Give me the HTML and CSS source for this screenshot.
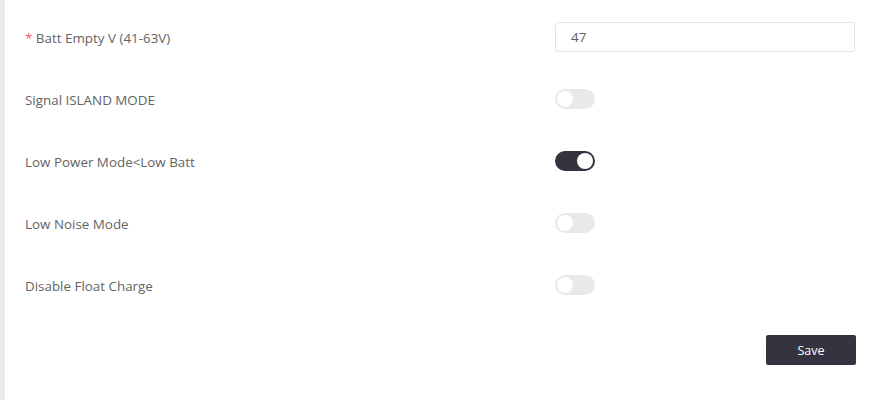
FILE: index.html
```html
<!DOCTYPE html>
<html>
<head>
<meta charset="utf-8">
<link rel="stylesheet" href="styles.css">
</head>
<body>
<div class="page">
  <div class="side"></div>
  <form class="form">
    <div class="row">
      <label class="label"><span class="req">*</span> Batt Empty V (41-63V)</label>
      <div class="control"><input class="input" type="text" value="47"></div>
    </div>
    <div class="row">
      <label class="label">Signal ISLAND MODE</label>
      <div class="control"><span class="switch"><span class="knob"></span></span></div>
    </div>
    <div class="row">
      <label class="label">Low Power Mode&lt;Low Batt</label>
      <div class="control"><span class="switch on"><span class="knob"></span></span></div>
    </div>
    <div class="row">
      <label class="label">Low Noise Mode</label>
      <div class="control"><span class="switch"><span class="knob"></span></span></div>
    </div>
    <div class="row">
      <label class="label">Disable Float Charge</label>
      <div class="control"><span class="switch"><span class="knob"></span></span></div>
    </div>
    <div class="actions">
      <button class="btn" type="button">Save</button>
    </div>
  </form>
</div>
</body>
</html>
```
FILE: styles.css
```css
* { box-sizing: border-box; }
html, body { margin: 0; padding: 0; background: #fff; }
body { font-family: "Open Sans", "Noto Sans", sans-serif; font-size: 13.4px; color: #646464; }
.page { display: flex; min-height: 400px; }
.side { width: 5px; background: #ebebeb; flex: none; }
.form { flex: 1; padding: 22px 38px 0 20px; }
.row { display: flex; align-items: center; height: 30px; margin-bottom: 32px; }
.label { flex: 1; padding-top: 2px; }
.req { color: #f5576c; }
.control { width: 300px; flex: none; display: flex; align-items: center; }
.input { width: 300px; height: 30px; border: 1px solid #e4e4e4; border-radius: 3px; padding: 0 15px; font: inherit; font-size: 13.4px; color: #606060; outline: none; }
.switch { position: relative; display: inline-block; width: 40px; height: 20px; border-radius: 10px; background: #e9e9e9; }
.switch .knob { position: absolute; top: 2px; left: 2px; width: 16px; height: 16px; border-radius: 50%; background: #fff; }
.switch.on { background: #35333f; }
.switch.on .knob { left: 22px; }
.actions { display: flex; justify-content: flex-end; margin-top: 35px; margin-right: -1px; }
.btn { width: 90px; height: 30px; border: none; border-radius: 2px; background: #35333f; color: #fff; font: inherit; font-size: 12.5px; }
```
